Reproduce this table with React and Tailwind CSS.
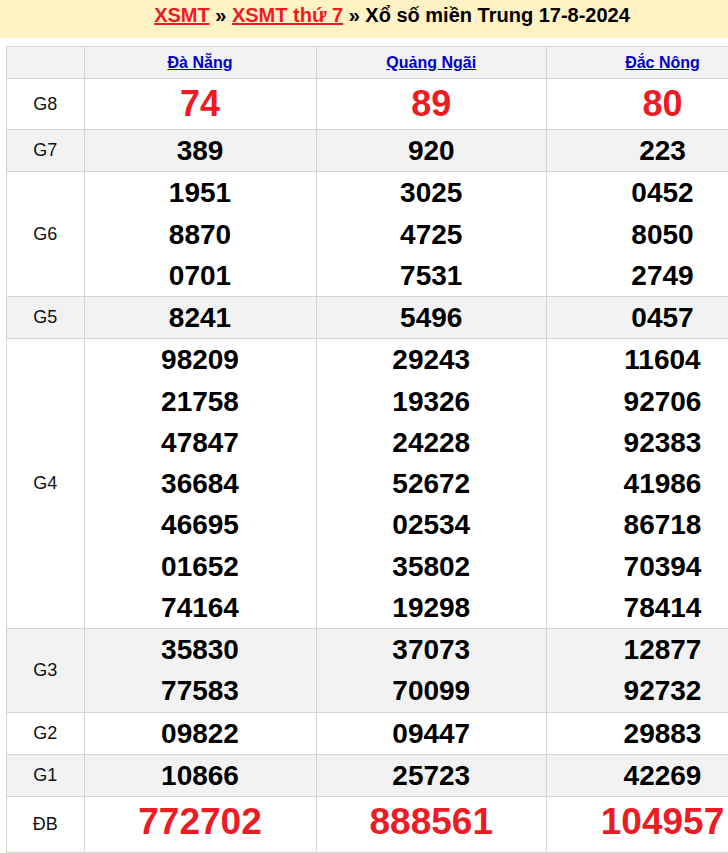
import React from "react";

const provinces = ["Đà Nẵng", "Quảng Ngãi", "Đắc Nông"];

const prizes = [
  { name: "G8", big: true, values: [["74"], ["89"], ["80"]] },
  { name: "G7", values: [["389"], ["920"], ["223"]] },
  {
    name: "G6",
    values: [
      ["1951", "8870", "0701"],
      ["3025", "4725", "7531"],
      ["0452", "8050", "2749"],
    ],
  },
  { name: "G5", values: [["8241"], ["5496"], ["0457"]] },
  {
    name: "G4",
    values: [
      ["98209", "21758", "47847", "36684", "46695", "01652", "74164"],
      ["29243", "19326", "24228", "52672", "02534", "35802", "19298"],
      ["11604", "92706", "92383", "41986", "86718", "70394", "78414"],
    ],
  },
  {
    name: "G3",
    values: [
      ["35830", "77583"],
      ["37073", "70099"],
      ["12877", "92732"],
    ],
  },
  { name: "G2", values: [["09822"], ["09447"], ["29883"]] },
  { name: "G1", values: [["10866"], ["25723"], ["42269"]] },
  { name: "ĐB", special: true, values: [["772702"], ["888561"], ["104957"]] },
];

const cellBorder = "border border-[#dad4ce]";

function PrizeRow({ prize, index }) {
  const bg = index % 2 === 1 ? "bg-[#f2f2f2]" : "bg-white";
  return (
    <tr className={bg}>
      <td className={`${cellBorder} text-center align-middle text-[18px] text-[#111]`}>
        {prize.name}
      </td>
      {prize.values.map((list, i) => (
        <td key={i} className={`${cellBorder} text-center align-middle p-0`}>
          {prize.big && (
            <div className="h-[50px] leading-[50px] text-[36px] font-bold text-[#ed1c24]">
              {list[0]}
            </div>
          )}
          {prize.special && (
            <div className="h-[55px] pb-[6px] flex items-center justify-center text-[37px] font-bold text-[#ed1c24]">
              {list[0]}
            </div>
          )}
          {!prize.big &&
            !prize.special &&
            list.map((n) => (
              <div key={n} className="h-[41.25px] leading-[41.25px] text-[28px] font-bold text-black">
                {n}
              </div>
            ))}
        </td>
      ))}
    </tr>
  );
}

export default function App() {
  return (
    <div className="w-full overflow-hidden bg-white font-['Liberation_Sans',Arial,sans-serif]">
      <div className="w-[784px]">
        {/* Title bar */}
        <div className="h-[38px] bg-[#fff2c4] pt-[4px] text-center text-[20px] leading-[22px] font-bold text-black">
          <a href="#" className="text-[#ed1c24] underline">XSMT</a>
          {" » "}
          <a href="#" className="text-[#ed1c24] underline">XSMT thứ 7</a>
          {" » Xổ số miền Trung 17-8-2024"}
        </div>

        <div className="px-[6px] pt-[8px]">
          <table className="w-[772px] table-fixed border-collapse">
            <colgroup>
              <col className="w-[77.5px]" />
              <col className="w-[232px]" />
              <col className="w-[230.5px]" />
              <col className="w-[232px]" />
            </colgroup>
            <thead>
              <tr className="bg-[#f2f2f2]">
                <th className={`${cellBorder} h-[32px]`}></th>
                {provinces.map((p) => (
                  <th key={p} className={`${cellBorder} h-[32px] text-center align-middle`}>
                    <a href="#" className="text-[16px] font-bold text-[#0000cc] underline">
                      {p}
                    </a>
                  </th>
                ))}
              </tr>
            </thead>
            <tbody>
              {prizes.map((prize, i) => (
                <PrizeRow key={prize.name} prize={prize} index={i} />
              ))}
            </tbody>
          </table>
        </div>
      </div>
    </div>
  );
}
